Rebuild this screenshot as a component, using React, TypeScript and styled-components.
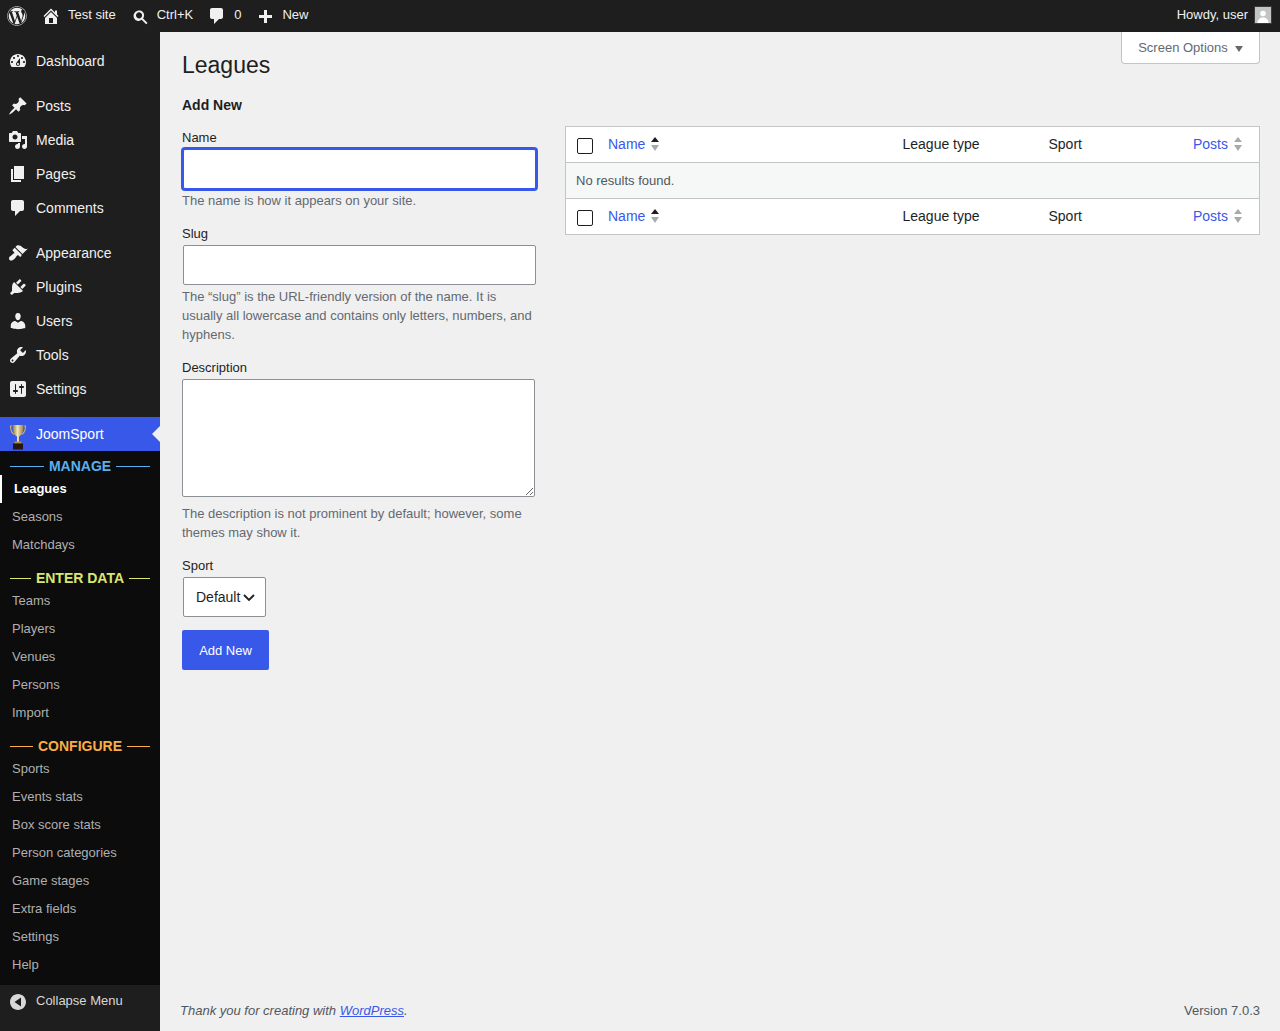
// Import Dependencies
import React from "react";
import styled, { createGlobalStyle } from "styled-components";
import { FaWordpress } from "react-icons/fa";

// Define Icons
const ICONS: Record<string, string> = {
	dashboard:
		"M3.76 16h12.48c1.1-1.37 1.76-3.11 1.76-5 0-4.42-3.58-8-8-8s-8 3.58-8 8c0 1.89.66 3.63 1.76 5zM10 4c.55 0 1 .45 1 1s-.45 1-1 1-1-.45-1-1 .45-1 1-1zM6 6c.55 0 1 .45 1 1s-.45 1-1 1-1-.45-1-1 .45-1 1-1zm8 0c.55 0 1 .45 1 1s-.45 1-1 1-1-.45-1-1 .45-1 1-1zm-5.37 5.55L12 7v6c0 1.1-.9 2-2 2s-2-.9-2-2c0-.57.24-1.08.63-1.45zM4 10c.55 0 1 .45 1 1s-.45 1-1 1-1-.45-1-1 .45-1 1-1zm12 0c.55 0 1 .45 1 1s-.45 1-1 1-1-.45-1-1 .45-1 1-1zm-5 3c0-.55-.45-1-1-1s-1 .45-1 1 .45 1 1 1 1-.45 1-1z",
	posts:
		"M10.44 3.02l1.82-1.82 6.36 6.35-1.83 1.82c-1.05-.68-2.48-.57-3.41.36l-.75.75c-.92.93-1.04 2.35-.35 3.41l-1.83 1.82-2.41-2.41-2.8 2.79c-.42.42-3.38 2.71-3.8 2.29s1.86-3.39 2.28-3.81l2.79-2.79L4.1 9.36l1.83-1.82c1.05.69 2.48.57 3.4-.36l.75-.75c.93-.92 1.05-2.35.36-3.41z",
	media:
		"M13 11V4c0-.55-.45-1-1-1h-1.67L9 1H5L3.67 3H2c-.55 0-1 .45-1 1v7c0 .55.45 1 1 1h10c.55 0 1-.45 1-1zM7 4.5c1.38 0 2.5 1.12 2.5 2.5S8.38 9.5 7 9.5 4.5 8.38 4.5 7 5.62 4.5 7 4.5zM14 6h5v10.5c0 1.38-1.12 2.5-2.5 2.5S14 17.88 14 16.5s1.12-2.5 2.5-2.5c.17 0 .34.02.5.05V9h-3V6zm-4 8.05V13h2v3.5c0 1.38-1.12 2.5-2.5 2.5S7 17.88 7 16.5 8.12 14 9.5 14c.17 0 .34.02.5.05z",
	pages: "M6 15V2h10v13H6zm-1 1h8v2H3V5h2v11z",
	comments:
		"M5 2h9c1.1 0 2 .9 2 2v7c0 1.1-.9 2-2 2h-2l-5 5v-5H5c-1.1 0-2-.9-2-2V4c0-1.1.9-2 2-2z",
	appearance:
		"M14.48 11.06L7.41 3.99l1.5-1.5c.5-.56 2.3-.47 3.51.32 1.21.8 1.43 1.28 2.91 2.1 1.18.64 2.45 1.26 4.45.85zm-.71.71L6.7 4.7 4.93 6.47c-.39.39-.39 1.02 0 1.41l1.06 1.06c.39.39.39 1.03 0 1.42-.6.6-1.43 1.11-2.21 1.69-.35.26-.7.53-1.01.84C1.43 13.23 1 14.47 1 15.5c0 .53.21 1.04.59 1.41.37.38.88.59 1.41.59 1.03 0 2.27-.43 3.63-1.77.31-.31.58-.66.84-1.01.58-.78 1.09-1.61 1.69-2.21.39-.39 1.03-.39 1.42 0l1.06 1.06c.39.39 1.02.39 1.41 0z",
	plugins:
		"M13.11 4.36L9.87 7.6 8 5.73l3.24-3.24c.35-.34 1.05-.2 1.56.32.52.51.66 1.21.31 1.55zm-8 1.77l.91-1.12 9.01 9.01-1.19.84c-.71.71-2.63 1.16-3.82 1.16H6.14L4.9 17.26c-.59.59-1.54.59-2.12 0-.59-.58-.59-1.53 0-2.12l1.24-1.24v-3.88c0-1.13.4-3.19 1.09-3.89zm7.26 3.97l3.24-3.24c.34-.35 1.04-.21 1.55.31.52.51.66 1.21.31 1.55l-3.24 3.25z",
	users:
		"M10 9.25c-2.27 0-2.73-3.44-2.73-3.44C7 4.02 7.82 2 9.97 2c2.16 0 2.98 2.02 2.71 3.81 0 0-.41 3.44-2.68 3.44zm0 2.57L12.72 10c2.39 0 4.52 2.33 4.52 4.53v2.49s-3.65 1.13-7.24 1.13c-3.65 0-7.24-1.13-7.24-1.13v-2.49c0-2.25 1.94-4.48 4.47-4.48z",
	tools:
		"M16.68 9.77c-1.34 1.34-3.3 1.67-4.95.99l-5.41 6.52c-.99.99-2.59.99-3.58 0s-.99-2.59 0-3.57l6.52-5.42c-.68-1.65-.35-3.61.99-4.95 1.28-1.28 3.12-1.62 4.72-1.06l-2.89 2.89 2.82 2.82 2.86-2.87c.53 1.58.18 3.39-1.08 4.65zM3.81 16.21c.4.39 1.04.39 1.43 0 .4-.4.4-1.04 0-1.43-.39-.4-1.03-.4-1.43 0-.39.39-.39 1.03 0 1.43z",
	settings:
		"M18 16V4c0-1.1-.9-2-2-2H4c-1.1 0-2 .9-2 2v12c0 1.1.9 2 2 2h12c1.1 0 2-.9 2-2zM8 11h1c.55 0 1 .45 1 1s-.45 1-1 1H8v1.5c0 .28-.22.5-.5.5s-.5-.22-.5-.5V13H6c-.55 0-1-.45-1-1s.45-1 1-1h1V5.5c0-.28.22-.5.5-.5s.5.22.5.5V11zm5-2h-1c-.55 0-1-.45-1-1s.45-1 1-1h1V5.5c0-.28.22-.5.5-.5s.5.22.5.5V7h1c.55 0 1 .45 1 1s-.45 1-1 1h-1v5.5c0 .28-.22.5-.5.5s-.5-.22-.5-.5V9z",
	home: "M16 8.5l1.53 1.53-1.06 1.06L10 4.62l-6.47 6.47-1.06-1.06L10 2.5l4 4v-2h2v4zm-6-2.46l6 5.99V18H4v-5.97zM12 17v-5H8v5h4z",
	search:
		"M12.64 5.78c1.82 1.82 1.97 4.66.44 6.66l4.5 4.51-1.41 1.41-4.5-4.5c-2.01 1.53-4.85 1.38-6.67-.44-1.98-1.98-1.98-5.2 0-7.18 2.17-2.02 5.66-2.44 7.64-.46zm-1.41 1.41c-1.2-1.19-3.13-1.19-4.32 0-1.2 1.2-1.2 3.13 0 4.32 1.19 1.2 3.12 1.2 4.32 0 1.19-1.19 1.19-3.12 0-4.32z",
	plus: "M17 9v3h-5v5H9v-5H4V9h5V4h3v5h5z",
	collapse:
		"M18 10c0-4.42-3.58-8-8-8s-8 3.58-8 8 3.58 8 8 8 8-3.58 8-8zm-5 4.5L6.5 10 13 5.5v9z",
};

// Define Types
interface MenuEntry {
	label: string;
	icon: string;
}
interface SubGroup {
	title: string;
	color: string;
	items: string[];
}
interface FirstProps {
	$first?: boolean;
}
interface ActiveProps {
	$active?: boolean;
}
interface SizeProps {
	$size?: number;
}
interface SortProps {
	$up?: string;
	$down?: string;
}
interface ColumnProps {
	$width?: string;
}

// Define Data
const MENU_GROUPS: MenuEntry[][] = [
	[{ label: "Dashboard", icon: "dashboard" }],
	[
		{ label: "Posts", icon: "posts" },
		{ label: "Media", icon: "media" },
		{ label: "Pages", icon: "pages" },
		{ label: "Comments", icon: "comments" },
	],
	[
		{ label: "Appearance", icon: "appearance" },
		{ label: "Plugins", icon: "plugins" },
		{ label: "Users", icon: "users" },
		{ label: "Tools", icon: "tools" },
		{ label: "Settings", icon: "settings" },
	],
];
const SUB_GROUPS: SubGroup[] = [
	{
		title: "MANAGE",
		color: "#5ab0ec",
		items: ["Leagues", "Seasons", "Matchdays"],
	},
	{
		title: "ENTER DATA",
		color: "#dce66e",
		items: ["Teams", "Players", "Venues", "Persons", "Import"],
	},
	{
		title: "CONFIGURE",
		color: "#f9ae45",
		items: [
			"Sports",
			"Events stats",
			"Box score stats",
			"Person categories",
			"Game stages",
			"Extra fields",
			"Settings",
			"Help",
		],
	},
];

// Define Styles
const GlobalStyle = createGlobalStyle`
	* {
		box-sizing: border-box;
	}
	html,
	body {
		margin: 0;
		padding: 0;
		background: #f0f0f0;
		font-family: "Liberation Sans", Arial, sans-serif;
		color: #1e1e1e;
	}
`;
const Shell = styled.div`
	display: flex;
	flex-direction: column;
	height: 1031px;
	overflow: hidden;
`;
const AdminBar = styled.header`
	height: 32px;
	flex: none;
	background: #1e1e1e;
	color: #f0f0f0;
	font-size: 13px;
	line-height: 30px;
	display: flex;
	justify-content: space-between;
`;
const AdminBarGroup = styled.div`
	display: flex;
`;
const AdminBarItem = styled.div`
	display: flex;
	gap: 7px;
	padding: 0 7px;
	height: 32px;
	white-space: nowrap;

	svg {
		margin-top: 6px;
	}
`;
const LogoItem = styled.div`
	display: flex;
	align-items: center;
	padding: 0 7px;
	height: 32px;
	color: #f0f0f0;
`;
const UserItem = styled.div`
	display: flex;
	gap: 6px;
	padding-right: 8px;
	color: #f0f0f0;
`;
const Avatar = styled.svg`
	width: 18px;
	height: 18px;
	margin-top: 6px;
	background: #c4c4c4;
	border: 1px solid #3a3a3a;
	display: block;
	fill: #fff;
`;
const Body = styled.div`
	flex: 1;
	display: flex;
	min-height: 0;
`;
const Sidebar = styled.nav`
	width: 160px;
	flex: none;
	background: #1e1e1e;
	color: #f0f0f0;
	font-size: 14px;
	padding-top: 12px;
	display: flex;
	flex-direction: column;
`;
const MenuGroup = styled.div`
	margin-bottom: 11px;
`;
const MenuRow = styled.div`
	height: 34px;
	display: flex;
	align-items: center;
	gap: 8px;
	padding-left: 8px;
`;
const ActiveRow = styled(MenuRow)`
	position: relative;
	background: #3858e9;
	color: #fff;

	&::after {
		content: "";
		position: absolute;
		right: 0;
		top: 9px;
		border: 8px solid transparent;
		border-right-color: #f0f0f0;
	}
`;
const Icon = styled.svg<SizeProps>`
	width: ${(props) => props.$size ?? 20}px;
	height: ${(props) => props.$size ?? 20}px;
	fill: currentColor;
	flex: none;
`;
const TrophyIcon = styled.svg`
	width: 20px;
	height: 26px;
	flex: none;
	align-self: flex-end;
	margin-bottom: 1px;
`;
const SubMenu = styled.div`
	background: #0c0c0c;
	padding-bottom: 6px;
	font-size: 13px;
	color: #b0b0b0;
`;
const SubHeader = styled.div<FirstProps & { $color: string }>`
	display: flex;
	align-items: center;
	gap: 5px;
	padding: 0 10px;
	height: ${(props) => (props.$first ? 24 : 28)}px;
	padding-top: ${(props) => (props.$first ? 6 : 10)}px;
	font-size: 14px;
	font-weight: 700;
	color: ${(props) => props.$color};

	&::before,
	&::after {
		content: "";
		flex: 1;
		height: 1px;
		background: ${(props) => props.$color};
	}
`;
const SubItem = styled.div<ActiveProps>`
	height: 28px;
	display: flex;
	align-items: center;
	padding-left: 12px;
	padding-bottom: 2px;
	color: ${(props) => (props.$active ? "#fff" : "#b0b0b0")};
	font-weight: ${(props) => (props.$active ? 700 : 400)};
	border-left: ${(props) => (props.$active ? "2px solid #fff" : "none")};
`;
const CollapseRow = styled.div`
	height: 30px;
	display: flex;
	align-items: center;
	gap: 8px;
	padding-left: 8px;
	color: #d8d8d8;
	font-size: 13px;

	svg {
		margin-top: 4px;
	}
`;
const Main = styled.main`
	flex: 1;
	min-width: 0;
	position: relative;
	display: flex;
	flex-direction: column;
	padding: 0 20px 0 22px;
`;
const ScreenOptions = styled.button`
	position: absolute;
	top: 0;
	right: 20px;
	width: 139px;
	height: 32px;
	background: #fff;
	border: 1px solid #c3c4c7;
	border-top: none;
	border-radius: 0 0 4px 4px;
	color: #646970;
	font: 13px "Liberation Sans", Arial, sans-serif;
	display: flex;
	align-items: center;
	justify-content: center;
	gap: 7px;
	padding: 0;

	&::after {
		content: "";
		border: 4px solid transparent;
		border-top: 6px solid #646970;
		border-bottom: none;
		margin-top: 2px;
	}
`;
const Title = styled.h1`
	margin: 0;
	padding-top: 18px;
	font-size: 23px;
	font-weight: 400;
	line-height: 30px;
	color: #1e1e1e;
`;
const SectionTitle = styled.h2`
	margin: 15px 0 0;
	font-size: 14px;
	font-weight: 700;
	line-height: 20px;
`;
const Columns = styled.div`
	display: flex;
	align-items: flex-start;
	gap: 28px;
`;
const FormColumn = styled.form`
	width: 355px;
	flex: none;
	padding-top: 13px;
`;
const TableColumn = styled.div`
	flex: 1;
	min-width: 0;
	margin-top: 11px;
`;
const Field = styled.div`
	& + & {
		margin-top: 14px;
	}
`;
const Label = styled.label`
	display: block;
	font-size: 13px;
	line-height: 19px;
`;
const TextInput = styled.input`
	display: block;
	width: 353px;
	height: 40px;
	margin: 2px 1px 0;
	background: #fff;
	border: 1px solid #8c8f94;
	border-radius: 2px;
	outline: none;
`;
const FocusInput = styled(TextInput)`
	border: 1px solid #3858e9;
	box-shadow: 0 0 0 2px #3858e9;
`;
const TextArea = styled.textarea`
	display: block;
	width: 353px;
	height: 118px;
	background: #fff;
	border: 1px solid #8c8f94;
	border-radius: 2px;
	margin: 2px 0 5px;
`;
const Help = styled.p`
	margin: 0;
	padding-top: 2px;
	font-size: 13px;
	line-height: 19px;
	color: #646970;
`;
const SelectBox = styled.div`
	width: 83px;
	height: 40px;
	margin: 2px 0 0 1px;
	background: #fff;
	border: 1px solid #8c8f94;
	border-radius: 2px;
	display: flex;
	align-items: center;
	padding-left: 12px;
	gap: 2px;
	font-size: 14px;
`;
const SubmitButton = styled.button`
	display: block;
	width: 87px;
	height: 40px;
	margin-top: 13px;
	background: #3858e9;
	border: none;
	border-radius: 2px;
	color: #fff;
	font: 13px "Liberation Sans", Arial, sans-serif;
	padding: 0;
`;
const Table = styled.table`
	width: 100%;
	border-collapse: collapse;
	background: #fff;
	border: 1px solid #c3c4c7;
	table-layout: fixed;
	font-size: 14px;
`;
const Cell = styled.th<ColumnProps>`
	height: 36px;
	padding: 0 10px 2px;
	font-weight: 400;
	text-align: left;
	width: ${(props) => props.$width ?? "auto"};
`;
const NumberCell = styled(Cell)`
	text-align: right;
	padding-right: 17px;
`;
const CheckCell = styled(Cell)`
	padding: 2px 0 0 11px;
`;
const FootRow = styled.tr`
	border-top: 1px solid #c3c4c7;
`;
const EmptyCell = styled.td`
	height: 36px;
	padding: 0 10px;
	font-size: 13px;
	color: #50575e;
	background: #f6f7f7;
	border-top: 1px solid #c3c4c7;
`;
const CheckBox = styled.span`
	display: block;
	width: 16px;
	height: 16px;
	background: #fff;
	border: 1px solid #1e1e1e;
	border-radius: 2px;
`;
const SortLink = styled.span`
	display: inline-flex;
	align-items: center;
	gap: 6px;
	color: #3858e9;
`;
const SortArrows = styled.span<SortProps>`
	display: inline-flex;
	flex-direction: column;
	gap: 3px;
	margin-top: 1px;

	&::before,
	&::after {
		content: "";
		border-left: 4px solid transparent;
		border-right: 4px solid transparent;
	}
	&::before {
		border-bottom: 5px solid ${(props) => props.$up ?? "#a7aaad"};
	}
	&::after {
		border-top: 6px solid ${(props) => props.$down ?? "#a7aaad"};
	}
`;
const Footer = styled.footer`
	margin-top: auto;
	margin-left: -2px;
	height: 30px;
	display: flex;
	justify-content: space-between;
	font-size: 13px;
	line-height: 19px;
	color: #50575e;
`;
const FooterNote = styled.em`
	font-style: italic;
`;
const FooterLink = styled.a`
	color: #3858e9;
	text-decoration: underline;
`;

// Define Sub Components
function DashIcon({ name, size }: { name: string; size?: number }): JSX.Element {
	return (
		<Icon viewBox="0 0 20 20" $size={size}>
			<path d={ICONS[name]} />
		</Icon>
	);
}

function Trophy(): JSX.Element {
	return (
		<TrophyIcon viewBox="0 0 20 26">
			<defs>
				<linearGradient id="cup" x1="0" x2="1" y1="0" y2="0">
					<stop offset="0" stopColor="#8a7336" />
					<stop offset="0.45" stopColor="#f1e6b8" />
					<stop offset="1" stopColor="#9a8240" />
				</linearGradient>
			</defs>
			<path
				d="M4 2H2.500c0 4 1 7 4 8.500M16 2h1.500c0 4-1 7-4 8.500"
				fill="none"
				stroke="#c5ad66"
				strokeWidth="1.200"
			/>
			<path
				d="M4.500 1h11c0 6-1.500 10-4.500 11.500V18H9v-5.500C6 11 4.500 7 4.500 1z"
				fill="url(#cup)"
			/>
			<rect x="6.500" y="17.500" width="7" height="2" fill="#a8924f" />
			<rect x="5" y="19.500" width="10" height="6" fill="#2a1510" />
		</TrophyIcon>
	);
}

function SortableName(): JSX.Element {
	return (
		<SortLink>
			Name
			<SortArrows $up="#1e1e1e" />
		</SortLink>
	);
}

function SortablePosts(): JSX.Element {
	return (
		<SortLink>
			Posts
			<SortArrows />
		</SortLink>
	);
}

function HeadCells(): JSX.Element {
	return (
		<>
			<CheckCell $width="32.500px">
				<CheckBox />
			</CheckCell>
			<Cell>
				<SortableName />
			</Cell>
			<Cell $width="146px">League type</Cell>
			<Cell $width="113px">Sport</Cell>
			<NumberCell $width="108px">
				<SortablePosts />
			</NumberCell>
		</>
	);
}

// Export Component
export default function App(): JSX.Element {
	return (
		<>
			<GlobalStyle />
			<Shell>
				<AdminBar>
					<AdminBarGroup>
						<LogoItem>
							<FaWordpress size={20} />
						</LogoItem>
						<AdminBarItem>
							<DashIcon name="home" />
							Test site
						</AdminBarItem>
						<AdminBarItem>
							<DashIcon name="search" />
							Ctrl+K
						</AdminBarItem>
						<AdminBarItem>
							<DashIcon name="comments" />0
						</AdminBarItem>
						<AdminBarItem>
							<DashIcon name="plus" />
							New
						</AdminBarItem>
					</AdminBarGroup>
					<UserItem>
						Howdy, user
						<Avatar viewBox="0 0 16 16">
							<circle cx="8" cy="6.500" r="2.800" />
							<path d="M2.500 16c0-3.500 2.500-5.500 5.500-5.500s5.500 2 5.500 5.500z" />
						</Avatar>
					</UserItem>
				</AdminBar>
				<Body>
					<Sidebar>
						{MENU_GROUPS.map((group) => (
							<MenuGroup key={group[0].label}>
								{group.map((entry) => (
									<MenuRow key={entry.label}>
										<DashIcon name={entry.icon} />
										{entry.label}
									</MenuRow>
								))}
							</MenuGroup>
						))}
						<ActiveRow>
							<Trophy />
							JoomSport
						</ActiveRow>
						<SubMenu>
							{SUB_GROUPS.map((group, index) => (
								<div key={group.title}>
									<SubHeader $first={index === 0} $color={group.color}>
										{group.title}
									</SubHeader>
									{group.items.map((item) => (
										<SubItem key={item} $active={item === "Leagues"}>
											{item}
										</SubItem>
									))}
								</div>
							))}
						</SubMenu>
						<CollapseRow>
							<DashIcon name="collapse" />
							Collapse Menu
						</CollapseRow>
					</Sidebar>
					<Main>
						<ScreenOptions type="button">Screen Options</ScreenOptions>
						<Title>Leagues</Title>
						<SectionTitle>Add New</SectionTitle>
						<Columns>
							<FormColumn>
								<Field>
									<Label>Name</Label>
									<FocusInput type="text" />
									<Help>The name is how it appears on your site.</Help>
								</Field>
								<Field>
									<Label>Slug</Label>
									<TextInput type="text" />
									<Help>
										The “slug” is the URL-friendly version of the name. It is
										usually all lowercase and contains only letters, numbers,
										and hyphens.
									</Help>
								</Field>
								<Field>
									<Label>Description</Label>
									<TextArea />
									<Help>
										The description is not prominent by default; however, some
										themes may show it.
									</Help>
								</Field>
								<Field>
									<Label>Sport</Label>
									<SelectBox>
										Default
										<Icon viewBox="0 0 14 14" $size={14}>
											<path
												d="M2 5l5 5 5-5"
												fill="none"
												stroke="#1e1e1e"
												strokeWidth="1.800"
											/>
										</Icon>
									</SelectBox>
								</Field>
								<SubmitButton type="button">Add New</SubmitButton>
							</FormColumn>
							<TableColumn>
								<Table>
									<thead>
										<tr>
											<HeadCells />
										</tr>
									</thead>
									<tbody>
										<tr>
											<EmptyCell colSpan={5}>No results found.</EmptyCell>
										</tr>
									</tbody>
									<tfoot>
										<FootRow>
											<HeadCells />
										</FootRow>
									</tfoot>
								</Table>
							</TableColumn>
						</Columns>
						<Footer>
							<FooterNote>
								Thank you for creating with{" "}
								<FooterLink href="#">WordPress</FooterLink>.
							</FooterNote>
							<span>Version 7.0.3</span>
						</Footer>
					</Main>
				</Body>
			</Shell>
		</>
	);
}
